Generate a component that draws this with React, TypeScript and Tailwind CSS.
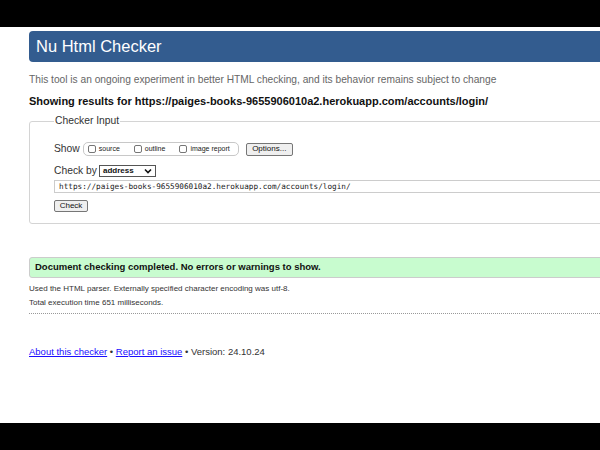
import React from 'react';

const Checkbox = ({ label }: { label: string }) => (
  <span className="flex items-center gap-[3px] whitespace-nowrap">
    <span className="inline-block w-[8px] h-[8px] border border-[#767676] rounded-[2px] bg-white" />
    <span className="text-[7px] text-[#222]">{label}</span>
  </span>
);

export default function App() {
  return (
    <div className="w-[600px] h-[450px] bg-black flex flex-col overflow-hidden font-['Liberation_Sans',Arial,sans-serif]">
      <div className="h-[27px] shrink-0" />

      <div className="h-[396px] bg-white overflow-hidden">
        <div className="w-[640px] pl-[29px]">
          {/* Header */}
          <div className="mt-[4px] h-[31px] bg-[#335c8f] rounded-l-[4px] flex items-center pl-[7px]">
            <h1 className="text-white text-[16.5px] leading-none">Nu Html Checker</h1>
          </div>

          <p className="mt-[11px] text-[10.2px] leading-[14px] text-[#666]">
            This tool is an ongoing experiment in better HTML checking, and its behavior remains subject to change
          </p>
          <p className="mt-[6px] text-[11px] leading-[16px] font-bold text-[#111]">
            Showing results for https://paiges-books-9655906010a2.herokuapp.com/accounts/login/
          </p>

          {/* Checker input fieldset */}
          <fieldset className="mt-[5px] border border-[#d4d4d4] rounded-l-[3px] pl-[24px] pr-0 pb-[11px] pt-[3px]">
            <legend className="text-[10.3px] leading-[14px] text-[#333] px-[1px]">Checker Input</legend>

            <div className="flex items-center h-[16px] mt-[10px]">
              <span className="text-[10.3px] text-[#333]">Show</span>
              <span className="ml-[3px] flex items-center gap-[14px] h-[14px] w-[156px] border border-[#c8c8c8] rounded-[5px] px-[4px]">
                <Checkbox label="source" />
                <Checkbox label="outline" />
                <Checkbox label="image report" />
              </span>
              <span className="ml-[7px] h-[13px] w-[47px] flex items-center justify-center border border-[#767676] bg-[#efefef] rounded-[2px] text-[8px] text-[#111]">
                Options...
              </span>
            </div>

            <div className="flex items-center h-[16px] mt-[6px]">
              <span className="text-[10.3px] text-[#333]">Check by</span>
              <span className="ml-[2px] h-[12px] w-[57px] flex items-center justify-between border border-[#555] px-[3px] text-[8px] font-bold text-[#111]">
                address
                <svg width="8" height="6" viewBox="0 0 8 6">
                  <path d="M1 1.5 L4 4.5 L7 1.5" fill="none" stroke="#111" strokeWidth="1.6" />
                </svg>
              </span>
            </div>

            <div className="mt-[1px] h-[13px] border border-[#ccc] pl-[4px] flex items-center font-['DejaVu_Sans_Mono',monospace] text-[7.7px] text-[#222]">
              https://paiges-books-9655906010a2.herokuapp.com/accounts/login/
            </div>

            <div className="mt-[7px] h-[12px] w-[34px] flex items-center justify-center border border-[#767676] bg-[#efefef] rounded-[2px] text-[8px] text-[#111]">
              Check
            </div>
          </fieldset>

          {/* Result */}
          <div className="mt-[33px] h-[21px] bg-[#c8fccf] border border-[#ccc] rounded-l-[3px] flex items-center pl-[5px]">
            <span className="text-[9.5px] font-bold text-[#111]">Document checking completed. No errors or warnings to show.</span>
          </div>

          <p className="mt-[5px] text-[8px] leading-[12px] text-[#333]">
            Used the HTML parser. Externally specified character encoding was utf-8.
          </p>
          <p className="mt-[2px] text-[8px] leading-[12px] text-[#333]">Total execution time 651 milliseconds.</p>
          <div className="mt-[4px] border-t border-dotted border-[#999]" />

          <p className="mt-[31px] text-[9.5px] text-[#333]">
            <a className="text-[#1a0dff] underline">About this checker</a>
            {' • '}
            <a className="text-[#1a0dff] underline">Report an issue</a>
            {' • Version: 24.10.24'}
          </p>
        </div>
      </div>

      <div className="h-[27px] shrink-0" />
    </div>
  );
}
